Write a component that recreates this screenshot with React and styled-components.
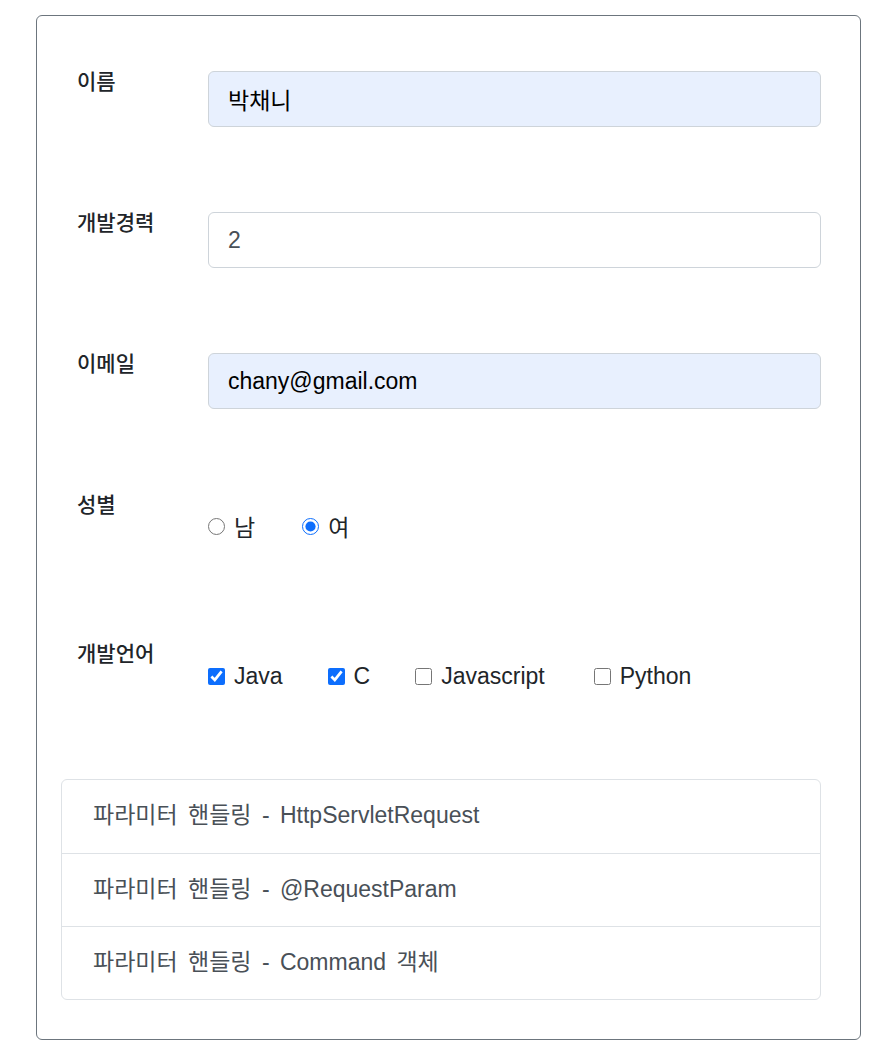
import React from "react";
import styled, { createGlobalStyle } from "styled-components";

const GlobalStyle = createGlobalStyle`
    body {
        margin: 0;
        background: #fff;
        font-family: "Liberation Sans", "Noto Sans CJK KR", sans-serif;
        color: #212529;
    }
`;

const Page = styled.div`
    padding: 15px 14px 20px 36px;
`;

const Card = styled.div`
    width: 825px;
    box-sizing: border-box;
    border: 1px solid #6c757d;
    border-radius: 6px;
    padding: 55px 39px 39px 24px;
`;

const Row = styled.div`
    display: grid;
    grid-template-columns: 147px 1fr;
    align-items: start;
    margin-bottom: ${(p) => p.gap || 85}px;
`;

const Label = styled.label`
    padding: 0 0 0 16px;
    font-size: 21px;
    line-height: 22px;
    font-weight: 500;
    color: #212529;
`;

const Input = styled.input`
    height: 56px;
    box-sizing: border-box;
    border: 1px solid #ced4da;
    border-radius: 6px;
    padding: 0 19px;
    font-family: inherit;
    font-size: 23px;
    color: ${(p) => (p.filled ? "#000" : "#495057")};
    background: ${(p) => (p.filled ? "#e8f0fe" : "#fff")};
    outline: none;
`;

const Options = styled.div`
    display: flex;
    align-items: center;
    padding-top: ${(p) => p.top || 20}px;
    height: 24px;
`;

const Option = styled.label`
    display: flex;
    flex-shrink: 0;
    align-items: center;
    margin-right: ${(p) => p.space}px;
    font-size: 23px;
    white-space: nowrap;
    color: #212529;
    input {
        width: 17px;
        height: 17px;
        margin: 0 9px 0 0;
        accent-color: #0d6efd;
    }
`;

const List = styled.ul`
    list-style: none;
    margin: 0;
    padding: 0;
    border: 1px solid #dee2e6;
    border-radius: 6px;
`;

const Item = styled.li`
    height: 73px;
    box-sizing: border-box;
    display: flex;
    align-items: center;
    padding: 0 0 7px 31px;
    font-size: 23px;
    word-spacing: 4px;
    color: #495057;
    & + & {
        border-top: 1px solid #dee2e6;
    }
`;

const langs = [
    { name: "Java", checked: true, space: 45 },
    { name: "C", checked: true, space: 45 },
    { name: "Javascript", checked: false, space: 49 },
    { name: "Python", checked: false, space: 0 },
];

const items = [
    "파라미터 핸들링 - HttpServletRequest",
    "파라미터 핸들링 - @RequestParam",
    "파라미터 핸들링 - Command 객체",
];

export default function App() {
    return (
        <>
            <GlobalStyle />
            <Page>
                <Card>
                    <Row>
                        <Label>이름</Label>
                        <Input filled defaultValue="박채니" />
                    </Row>
                    <Row>
                        <Label>개발경력</Label>
                        <Input defaultValue="2" />
                    </Row>
                    <Row>
                        <Label>이메일</Label>
                        <Input filled defaultValue="chany@gmail.com" />
                    </Row>
                    <Row gap={105}>
                        <Label>성별</Label>
                        <Options top={20}>
                            <Option space={47}>
                                <input type="radio" name="gender" />남
                            </Option>
                            <Option space={0}>
                                <input type="radio" name="gender" defaultChecked />여
                            </Option>
                        </Options>
                    </Row>
                    <Row gap={91}>
                        <Label>개발언어</Label>
                        <Options top={21}>
                            {langs.map((l) => (
                                <Option key={l.name} space={l.space}>
                                    <input type="checkbox" defaultChecked={l.checked} />
                                    {l.name}
                                </Option>
                            ))}
                        </Options>
                    </Row>
                    <List>
                        {items.map((t) => (
                            <Item key={t}>{t}</Item>
                        ))}
                    </List>
                </Card>
            </Page>
        </>
    );
}
